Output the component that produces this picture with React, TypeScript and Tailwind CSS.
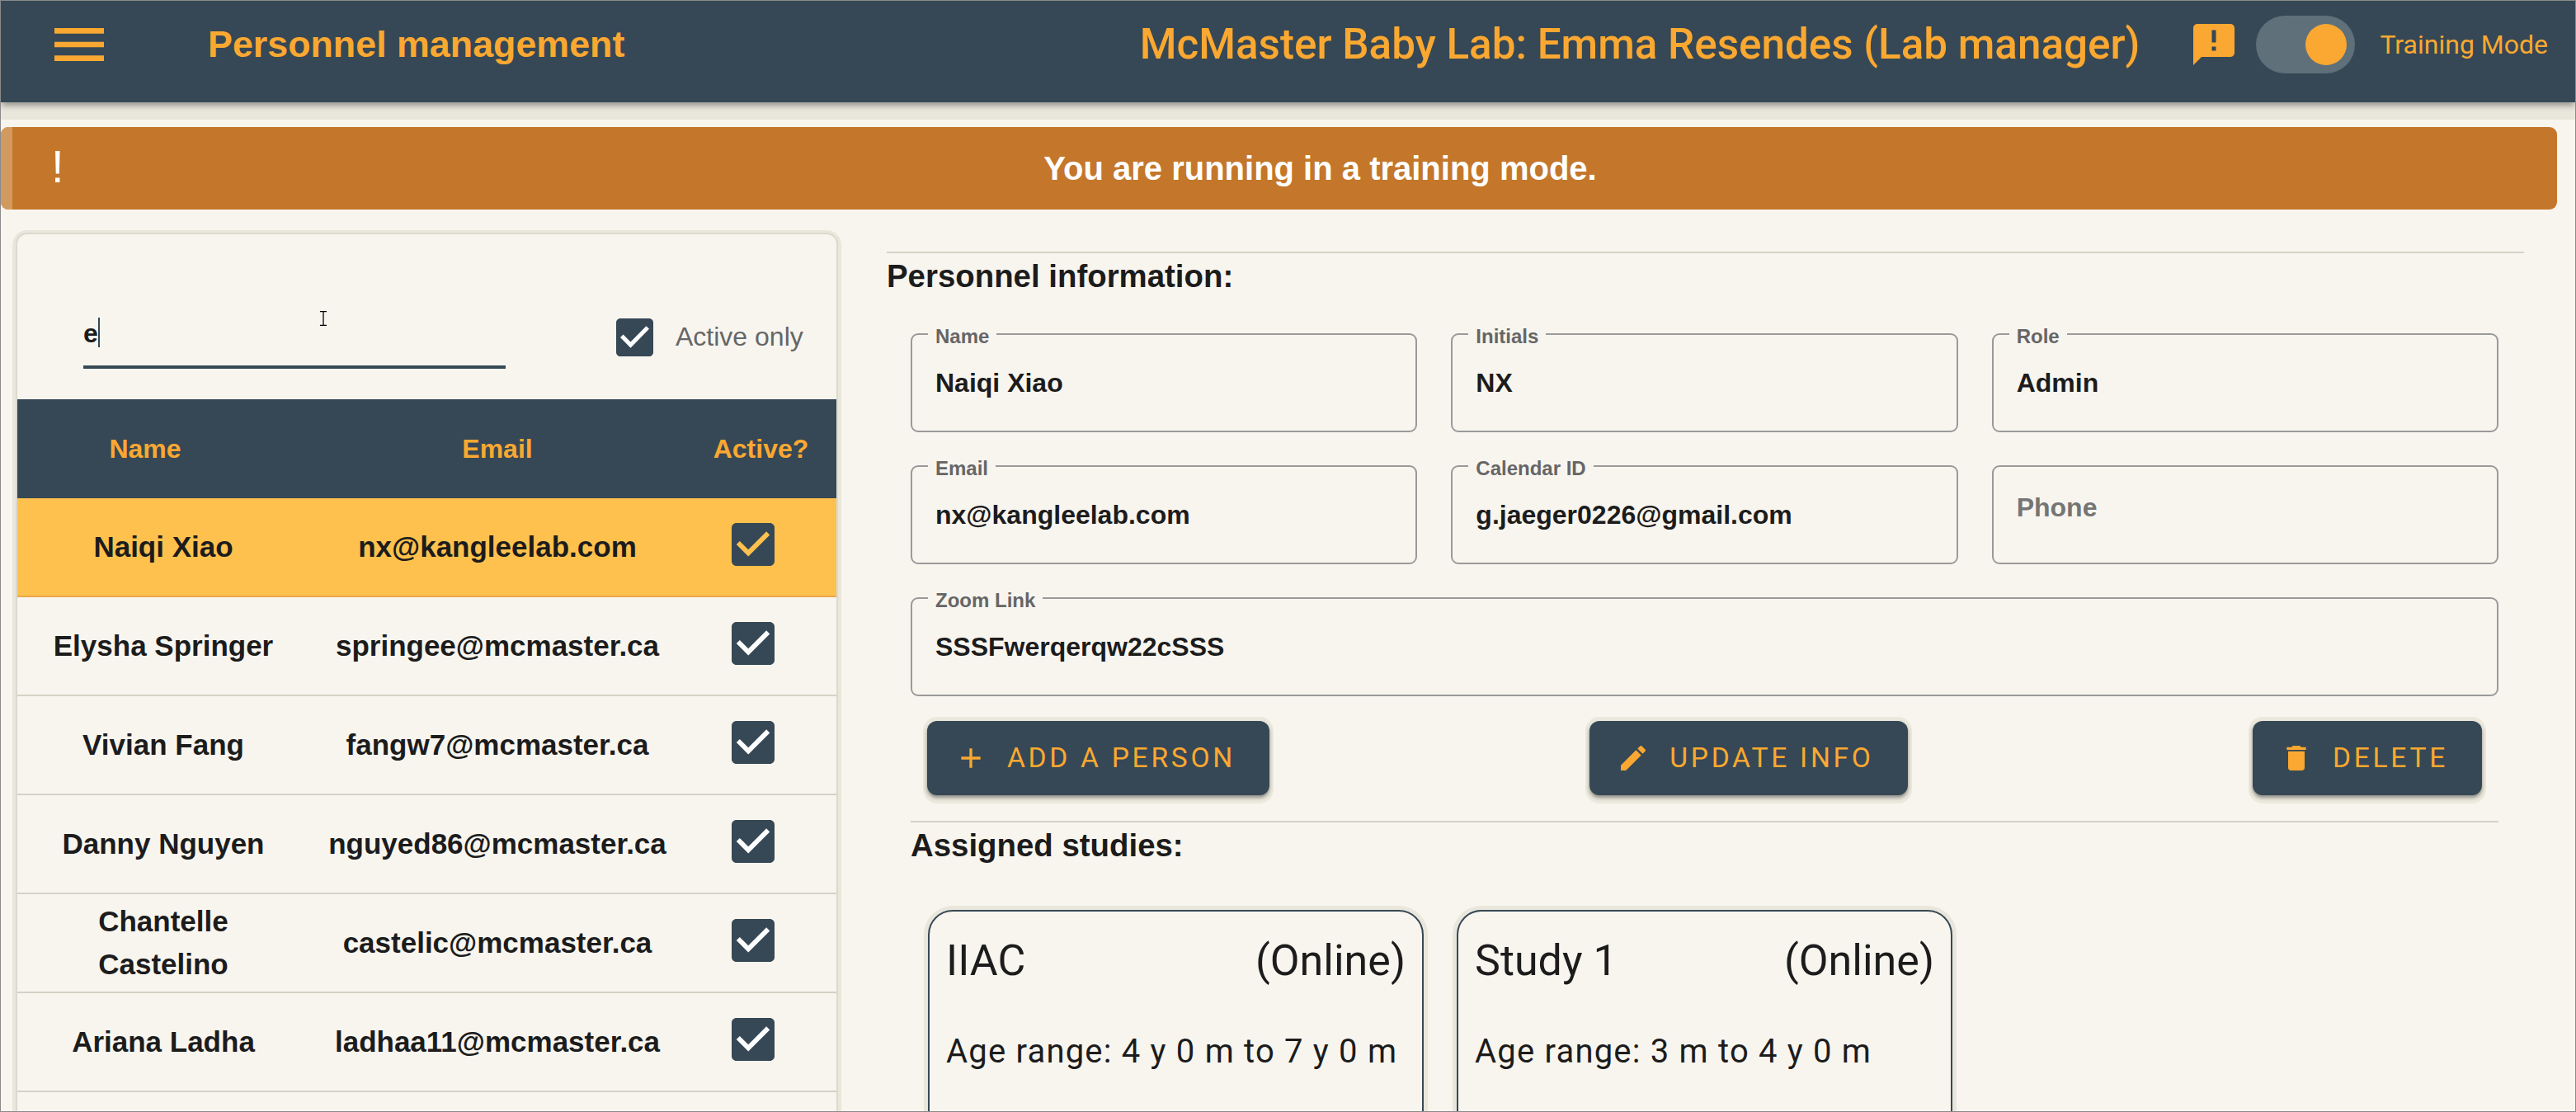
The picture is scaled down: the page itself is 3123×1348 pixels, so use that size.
import React from "react";

const MENU = "M3 18h18v-2H3v2zm0-5h18v-2H3v2zm0-7v2h18V6H3z";
const ANN = "M20 2H4c-1.1 0-1.99.9-1.99 2L2 22l4-4h14c1.1 0 2-.9 2-2V4c0-1.1-.9-2-2-2zm-7 9h-2V5h2v6zm0 4h-2v-2h2v2z";
const ADD = "M19 13h-6v6h-2v-6H5v-2h6V5h2v6h6v2z";
const EDIT = "M3 17.25V21h3.75L17.81 9.94l-3.75-3.75L3 17.25zM20.71 7.04c.39-.39.39-1.02 0-1.41l-2.34-2.34a.9959.9959 0 0 0-1.41 0l-1.83 1.83 3.75 3.75 1.83-1.83z";
const DEL = "M6 19c0 1.1.9 2 2 2h8c1.1 0 2-.9 2-2V7H6v12zM19 4h-3.5l-1-1h-5l-1 1H5v2h14V4z";

function Icon({ d, className }: { d: string; className: string }) {
  return (
    <svg viewBox="0 0 24 24" className={className} fill="currentColor">
      <path d={d} />
    </svg>
  );
}

function Check({ className, tick }: { className: string; tick: string }) {
  return (
    <svg viewBox="3 3 18 18" className={className} preserveAspectRatio="none">
      <path d="M19 3H5c-1.11 0-2 .9-2 2v14c0 1.1.89 2 2 2h14c1.1 0 2-.9 2-2V5c0-1.1-.9-2-2-2z" fill="#364855" />
      <path d="M10 17l-5-5 1.41-1.41L10 14.17l7.59-7.59L19 8l-9 9z" fill={tick} />
    </svg>
  );
}

function Field({ label, value, className }: { label?: string; value?: string; className?: string }) {
  return (
    <div className={`relative h-[120px] rounded-[9px] border-2 border-[#9a9a9a] flex items-center pl-[28px] ${className ?? ""}`}>
      {label && (
        <span className="absolute left-[19px] top-[-10px] px-[9px] bg-[#f8f5ef] text-[24px] leading-[24px] font-bold text-[#666666]">
          {label}
        </span>
      )}
      {value ? (
        <span className="text-[32px] font-bold text-[#1c1c1c]">{value}</span>
      ) : (
        <span className="text-[32px] font-bold text-[#757575] mb-[18px]">Phone</span>
      )}
    </div>
  );
}

function Btn({ d, label, className }: { d: string; label: string; className?: string }) {
  return (
    <div className={`h-[90px] rounded-[12px] bg-[#364855] flex items-center pl-[33px] pr-[41px] gap-[24px] text-[#faa831] shadow-[0_3px_4px_0_rgba(0,0,0,0.4),0_0_0_5px_#ebe8dd,0_5px_0_5px_#ebe8dd] ${className ?? ""}`}>
      <Icon d={d} className="w-[40px] h-[40px]" />
      <span className="font-['Roboto'] text-[33.6px] tracking-[3.7px] leading-none">{label}</span>
    </div>
  );
}

function StudyCard({ name, age }: { name: string; age: string }) {
  return (
    <div className="w-[601px] h-[400px] rounded-[30px] border-2 border-[#364855] px-[20px] pt-[30px] font-['Roboto'] text-[#1c1c1c] shadow-[0_0_0_5px_#e9e6dc]">
      <div className="flex justify-between text-[52px] leading-[60px]">
        <span>{name}</span>
        <span>(Online)</span>
      </div>
      <div className="mt-[55px] text-[40px] leading-[50px] tracking-[1.2px]">{age}</div>
    </div>
  );
}

const people = [
  ["Elysha Springer", "springee@mcmaster.ca"],
  ["Vivian Fang", "fangw7@mcmaster.ca"],
  ["Danny Nguyen", "nguyed86@mcmaster.ca"],
  ["Chantelle Castelino", "castelic@mcmaster.ca"],
  ["Ariana Ladha", "ladhaa11@mcmaster.ca"],
];

function Row({ name, email, selected }: { name: string; email: string; selected?: boolean }) {
  return (
    <div
      className={`grid grid-cols-[354px_456px_183px] h-[120px] items-center text-center text-[35px] leading-[52px] font-bold text-[#1c1c1c] border-b-2 ${
        selected ? "bg-[#ffc14d] border-[#e8a94a]" : "border-[#d5d2c6]"
      }`}
    >
      <div className="px-[30px]">{name}</div>
      <div>{email}</div>
      <div className="flex justify-center pr-[20px] pb-[6px]">
        <Check className="w-[52px] h-[52px]" tick={selected ? "#ffc14d" : "#ffffff"} />
      </div>
    </div>
  );
}

export default function App() {
  return (
    <div className="w-[3123px] h-[1348px] overflow-hidden border border-[#8a8a8a] bg-[#f8f5ef] font-['Liberation_Sans',sans-serif]">
      <header className="relative z-10 h-[123px] bg-[#364855] flex items-start pt-[13px] pl-[55px] pr-[33px] text-[#faa831] shadow-[0_5px_7px_-1px_rgba(0,0,0,0.35),0_21px_0_0_#e9e6dc]">
        <Icon d={MENU} className="w-[80px] h-[80px]" />
        <span className="ml-[116px] h-[80px] flex items-center text-[44.8px] font-bold">Personnel management</span>
        <span className="ml-auto h-[80px] flex items-center font-['Roboto'] font-medium text-[51.2px]">
          McMaster Baby Lab: Emma Resendes (Lab manager)
        </span>
        <div className="ml-[60px] h-[80px] flex items-center">
          <Icon d={ANN} className="w-[60px] h-[60px]" />
        </div>
        <div className="ml-[21px] mt-[5px] w-[120px] h-[70px] rounded-full bg-[#5f707a] flex items-center justify-end pr-[10px]">
          <div className="w-[50px] h-[50px] rounded-full bg-[#faa831]" />
        </div>
        <span className="ml-[30px] h-[80px] flex items-center font-['Roboto'] text-[32px]">Training Mode</span>
      </header>

      <div className="relative mt-[30px] mr-[22px] h-[100px] rounded-[9px] bg-[#c4772a] overflow-hidden flex items-center justify-center pl-[100px] text-white">
        <div className="absolute left-0 top-0 bottom-0 w-[14px] bg-[#d39a5f]" />
        <span className="absolute left-[61px] top-[20px] text-[56px] leading-[56px]">!</span>
        <span className="text-[40px] font-bold">You are running in a training mode.</span>
      </div>

      <div className="flex mt-[30px] items-start">
        <div className="ml-[20px] w-[993px] rounded-[12px] bg-[#f8f5ef] shadow-[0_0_0_2px_#dcd9ce,0_1px_0_6px_#e9e6dc] overflow-hidden">
          <div className="h-[200px] flex items-start pt-[102px]">
            <div className="relative ml-[80px] w-[512px] h-[61px] border-b-4 border-[#364855] text-[32px] font-bold text-[#1c1c1c] leading-[32px] pt-[2px]">
              e
              <span className="absolute left-[18px] top-[-1px] w-[2px] h-[36px] bg-[#364855]" />
              <svg viewBox="0 0 12 18" className="absolute left-[285px] top-[-9px] w-[12px] h-[18px]" fill="none" stroke="#000" strokeWidth="1.3">
                <path d="M2 .7h8M6 .7v16.6M2 17.3h8" />
              </svg>
            </div>
            <Check className="ml-[134px] w-[45px] h-[46px]" tick="#ffffff" />
            <span className="ml-[27px] text-[32px] leading-[45px] text-[#666666]">Active only</span>
          </div>
          <div className="grid grid-cols-[354px_456px_183px] h-[120px] items-center text-center bg-[#364855] text-[#faa831] text-[32px] font-bold">
            <div className="pr-[44px]">Name</div>
            <div>Email</div>
            <div>Active?</div>
          </div>
          <Row name="Naiqi Xiao" email="nx@kangleelab.com" selected />
          {people.map(([n, e]) => (
            <Row key={e} name={n} email={e} />
          ))}
          <div className="h-[120px]" />
        </div>

        <div className="ml-[61px] w-[1985px] pt-[21px]">
          <div className="h-[2px] bg-[#d5d2c6]" />
          <h2 className="mt-[8px] text-[38.4px] leading-[40px] font-bold text-[#1c1c1c]">Personnel information:</h2>
          <div className="ml-[29px] mr-[31px] mt-[49px] grid grid-cols-3 gap-x-[41px] gap-y-[40px]">
            <Field label="Name" value="Naiqi Xiao" />
            <Field label="Initials" value="NX" />
            <Field label="Role" value="Admin" />
            <Field label="Email" value="nx@kangleelab.com" />
            <Field label="Calendar ID" value="g.jaeger0226@gmail.com" />
            <Field />
            <Field label="Zoom Link" value="SSSFwerqerqw22cSSS" className="col-span-3" />
          </div>
          <div className="ml-[49px] mr-[51px] mt-[30px] flex justify-between">
            <Btn d={ADD} label="ADD A PERSON" />
            <Btn d={EDIT} label="UPDATE INFO" className="mr-[30px]" />
            <Btn d={DEL} label="DELETE" />
          </div>
          <div className="ml-[29px] mr-[31px] mt-[31px]">
            <div className="h-[2px] bg-[#d5d2c6]" />
            <h2 className="mt-[8px] text-[38.4px] leading-[40px] font-bold text-[#1c1c1c]">Assigned studies:</h2>
            <div className="mt-[58px] ml-[21px] flex gap-[40px]">
              <StudyCard name="IIAC" age="Age range: 4 y 0 m to 7 y 0 m" />
              <StudyCard name="Study 1" age="Age range: 3 m to 4 y 0 m" />
            </div>
          </div>
        </div>
      </div>
    </div>
  );
}
